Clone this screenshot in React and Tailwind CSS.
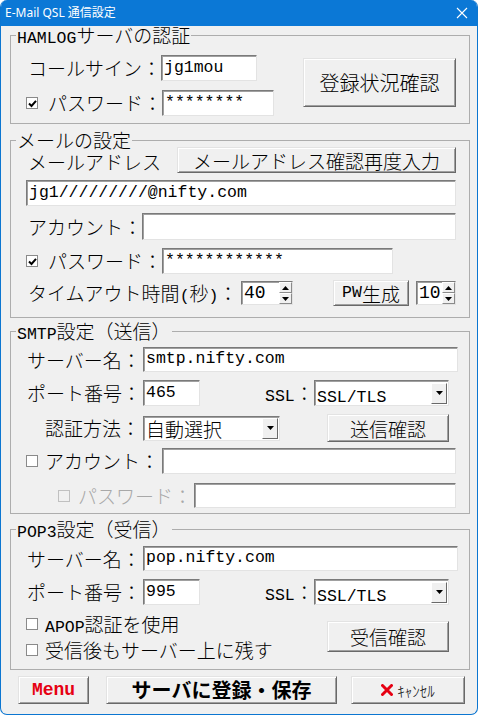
import React from "react";

const mono = "font-['Liberation_Mono','Noto_Sans_CJK_JP',monospace] text-[16.5px] font-normal";

const Box = ({ className = "", children }) => (
  <div
    className={`flex items-center bg-white border border-t-[#7a7a7a] border-l-[#7a7a7a] border-r-[#e3e3e3] border-b-[#e3e3e3] shadow-[inset_1px_1px_0_#a0a0a0] ${className}`}
  >
    {children}
  </div>
);

const Field = ({ className = "", value }) => (
  <Box className={className}>
    {value && <span className={`${mono} pl-[2px] leading-none text-black`}>{value}</span>}
  </Box>
);

const Btn = ({ className = "", children }) => (
  <button
    className={`flex items-center justify-center bg-[#f0f0f0] border border-t-[#e3e3e3] border-l-[#e3e3e3] border-r-[#696969] border-b-[#696969] shadow-[inset_1px_1px_0_#ffffff,inset_-1px_-1px_0_#a0a0a0] leading-none ${className}`}
  >
    {children}
  </button>
);

const Check = ({ checked, disabled }) => (
  <span
    className={`w-[12px] h-[12px] shrink-0 flex items-center justify-center border ${
      disabled ? "border-[#c0c0c0] bg-[#f0f0f0]" : "border-[#8a8a8a] bg-white"
    }`}
  >
    {checked && (
      <svg width="9" height="9" viewBox="0 0 9 9">
        <path d="M1 4.5 L3.5 7 L8 1.8" stroke="black" strokeWidth="2" fill="none" />
      </svg>
    )}
  </span>
);

const Arrow = ({ up }) => (
  <svg width="7" height="4" viewBox="0 0 7 4">
    <path d={up ? "M0 4h7L3.5 0z" : "M0 0h7L3.5 4z"} fill="black" />
  </svg>
);

const Select = ({ className = "", children }) => (
  <Box className={`justify-between ${className}`}>
    <span className="pl-[2px] leading-none">{children}</span>
    <span className="w-[16px] h-[21px] mr-[1px] flex items-center justify-center bg-[#f0f0f0] border border-t-[#ffffff] border-l-[#ffffff] border-r-[#696969] border-b-[#696969]">
      <Arrow />
    </span>
  </Box>
);

const Spin = ({ className = "", value }) => (
  <Box className={`justify-between ${className}`}>
    <span className={`${mono} pl-[2px] leading-none text-[18px]`}>{value}</span>
    <span className="flex flex-col w-[13px] h-full">
      <span className="flex-1 flex items-center justify-center bg-[#f0f0f0] border border-t-[#ffffff] border-l-[#ffffff] border-r-[#8a8a8a] border-b-[#8a8a8a]">
        <Arrow up />
      </span>
      <span className="flex-1 flex items-center justify-center bg-[#f0f0f0] border border-t-[#ffffff] border-l-[#ffffff] border-r-[#8a8a8a] border-b-[#8a8a8a]">
        <Arrow />
      </span>
    </span>
  </Box>
);

const Group = ({ title, className = "", children }) => (
  <fieldset className={`border border-[#adadad] ${className}`}>
    <legend className="ml-[5px] px-[1px] leading-[18px] text-[19px]">{title}</legend>
    {children}
  </fieldset>
);

// half-width latin run inside japanese text
const M = ({ children }) => <span className={`${mono} leading-[0px]`}>{children}</span>;

export default function App() {
  return (
    <div className="w-[478px] h-[715px] flex flex-col bg-[#f0f0f0] border border-t-0 border-[#0b76d1] rounded-[7px] overflow-hidden font-['Noto_Sans_CJK_JP',sans-serif] font-light text-[19px] text-black leading-[20px]">
      {/* Title bar */}
      <div className="h-[26px] shrink-0 bg-[#0b78d6] flex items-center justify-between pl-[4px] pr-[9px] text-white">
        <span className="text-[12px] font-normal font-['Noto_Sans','Noto_Sans_CJK_JP',sans-serif]">E-Mail QSL 通信設定</span>
        <svg width="12" height="12" viewBox="0 0 12 12">
          <path d="M1 1 L11 11 M11 1 L1 11" stroke="white" strokeWidth="1.1" />
        </svg>
      </div>

      <div className="flex flex-col pl-[9px] pr-[7px]">
        {/* HAMLOG */}
        <Group title={<><M>HAMLOG</M>サーバの認証</>} className="pb-[7px]">
          <div className="flex">
            <div className="flex flex-col w-[263px] pt-[11px] gap-[9px]">
              <div className="flex items-center h-[26px] pl-[17px]">
                <span className="w-[133px]">コールサイン：</span>
                <Field className="w-[96px] h-[26px]" value="jg1mou" />
              </div>
              <div className="flex items-center h-[26px] pl-[15px]">
                <Check checked />
                <span className="ml-[10px] w-[114px]">パスワード：</span>
                <Field className="w-[112px] h-[26px]" value="********" />
              </div>
            </div>
            <Btn className="ml-[29px] mt-[14px] w-[153px] h-[49px] text-[20px]">登録状況確認</Btn>
          </div>
        </Group>

        {/* Mail */}
        <Group title="メールの設定" className="mt-[7px] pb-[11px]">
          <div className="flex items-center h-[26px] mt-[-2px] pl-[17px]">
            <span className="w-[149px] pt-[3px]">メールアドレス</span>
            <Btn className="w-[279px] h-[26px] text-[19px]">メールアドレス確認再度入力</Btn>
          </div>
          <div className="pl-[15px] mt-[7px]">
            <Field className="w-[430px] h-[26px]" value="jg1/////////@nifty.com" />
          </div>
          <div className="flex items-center h-[27px] mt-[7px] pl-[17px]">
            <span className="w-[114px]">アカウント：</span>
            <Field className="w-[314px] h-[27px]" />
          </div>
          <div className="flex items-center h-[26px] mt-[8px] pl-[15px]">
            <Check checked />
            <span className="ml-[10px] w-[114px]">パスワード：</span>
            <Field className="w-[231px] h-[26px]" value="************" />
          </div>
          <div className="flex items-center h-[26px] mt-[6px] pl-[17px]">
            <span className="w-[213px]">
              タイムアウト時間<M>(</M>秒<M>)</M>：
            </span>
            <Spin className="w-[52px] h-[24px]" value="40" />
            <Btn className="ml-[40px] w-[76px] h-[26px] text-[19px]">
              <M>PW</M>生成
            </Btn>
            <Spin className="ml-[7px] w-[40px] h-[24px]" value="10" />
          </div>
        </Group>

        {/* SMTP */}
        <Group title={<><M>SMTP</M>設定（送信）</>} className="mt-[4px] pb-[5px]">
          <div className="flex items-center h-[25px] mt-[7px] pl-[16px]">
            <span className="w-[116px]">サーバー名：</span>
            <Field className="w-[315px] h-[25px]" value="smtp.nifty.com" />
          </div>
          <div className="flex items-center h-[26px] mt-[8px] pl-[16px]">
            <span className="w-[116px]">ポート番号：</span>
            <Field className="w-[57px] h-[26px]" value="465" />
            <span className="ml-[65px] w-[49px]">
              <M>SSL</M>：
            </span>
            <Select className="w-[135px] h-[26px]">
              <M>SSL/TLS</M>
            </Select>
          </div>
          <div className="flex items-center h-[28px] mt-[8px] pl-[34px]">
            <span className="w-[98px]">認証方法：</span>
            <Select className="w-[137px] h-[25px]">自動選択</Select>
            <Btn className="ml-[47px] w-[122px] h-[28px] text-[19px]">送信確認</Btn>
          </div>
          <div className="flex items-center h-[26px] mt-[6px] pl-[15px]">
            <Check />
            <span className="ml-[7px] w-[117px]">アカウント：</span>
            <Field className="w-[294px] h-[26px]" />
          </div>
          <div className="flex items-center h-[25px] mt-[9px] pl-[47px]">
            <Check disabled />
            <span className="ml-[8px] w-[116px] text-[#a8a8a8]">パスワード：</span>
            <Field className="w-[262px] h-[25px]" />
          </div>
        </Group>

        {/* POP3 */}
        <Group title={<><M>POP3</M>設定（受信）</>} className="mt-[6px] pb-[6px]">
          <div className="flex items-center h-[25px] mt-[8px] pl-[16px]">
            <span className="w-[116px]">サーバー名：</span>
            <Field className="w-[315px] h-[25px]" value="pop.nifty.com" />
          </div>
          <div className="flex items-center h-[26px] mt-[8px] pl-[16px]">
            <span className="w-[116px]">ポート番号：</span>
            <Field className="w-[57px] h-[26px]" value="995" />
            <span className="ml-[65px] w-[49px]">
              <M>SSL</M>：
            </span>
            <Select className="w-[135px] h-[26px]">
              <M>SSL/TLS</M>
            </Select>
          </div>
          <div className="flex mt-[6px]">
            <div className="flex flex-col w-[316px]">
              <div className="flex items-center h-[26px] pl-[15px]">
                <Check />
                <span className="ml-[7px]">
                  <M>APOP</M>認証を使用
                </span>
              </div>
              <div className="flex items-center h-[26px] pl-[15px]">
                <Check />
                <span className="ml-[7px]">受信後もサーバー上に残す</span>
              </div>
            </div>
            <Btn className="mt-[10px] w-[122px] h-[31px] text-[19px]">受信確認</Btn>
          </div>
        </Group>

        {/* Bottom buttons */}
        <div className="flex mt-[6px] h-[28px]">
          <Btn className="ml-[8px] w-[71px] h-[28px]">
            <span className="font-['Liberation_Mono',monospace] font-bold text-[18px] text-[#e60012]">Menu</span>
          </Btn>
          <Btn className="ml-[17px] w-[231px] h-[28px] text-[20px] font-bold">サーバに登録・保存</Btn>
          <Btn className="ml-[14px] w-[114px] h-[28px] gap-[4px]">
            <svg width="12" height="12" viewBox="0 0 12 12">
              <path d="M1.5 1.5 L10.5 10.5 M10.5 1.5 L1.5 10.5" stroke="#e60012" strokeWidth="3" strokeLinecap="round" />
            </svg>
            <span className="text-[15px]">ｷｬﾝｾﾙ</span>
          </Btn>
        </div>
      </div>
    </div>
  );
}
